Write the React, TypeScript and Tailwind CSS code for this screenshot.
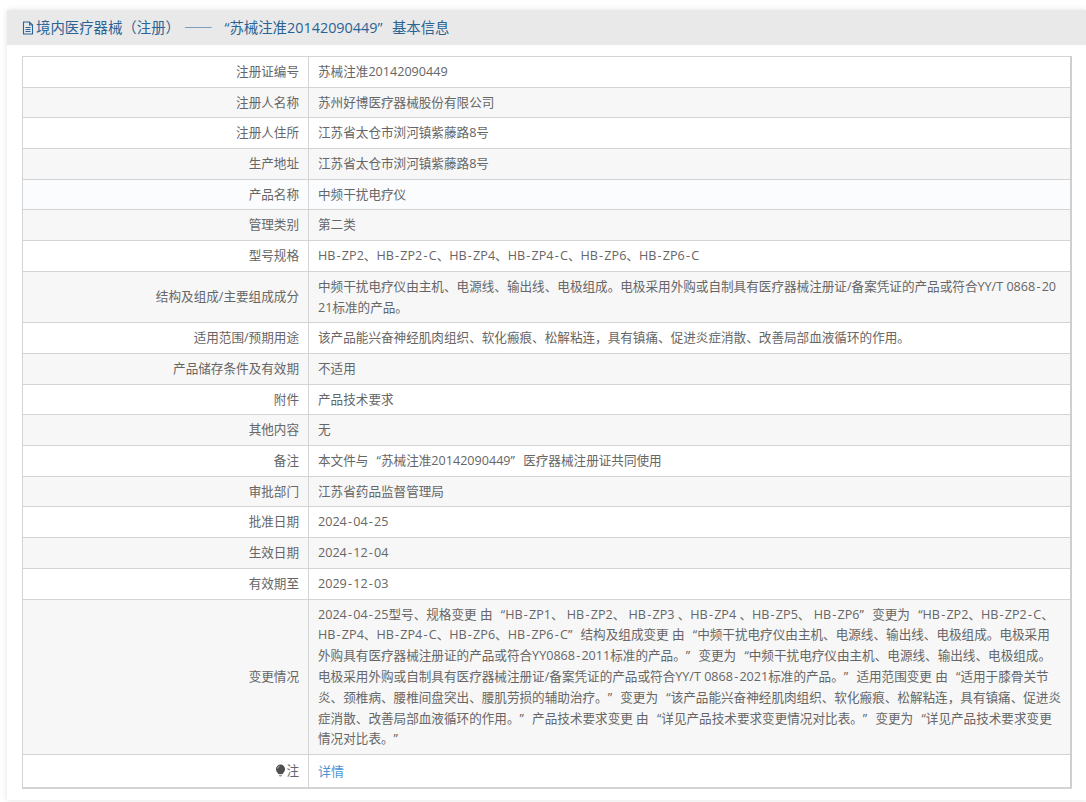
const rows: [string, string[]][] = [
  ["注册证编号", ["苏械注准20142090449"]],
  ["注册人名称", ["苏州好博医疗器械股份有限公司"]],
  ["注册人住所", ["江苏省太仓市浏河镇紫藤路8号"]],
  ["生产地址", ["江苏省太仓市浏河镇紫藤路8号"]],
  ["产品名称", ["中频干扰电疗仪"]],
  ["管理类别", ["第二类"]],
  ["型号规格", ["HB-ZP2、HB-ZP2-C、HB-ZP4、HB-ZP4-C、HB-ZP6、HB-ZP6-C"]],
  ["结构及组成/主要组成成分", ["中频干扰电疗仪由主机、电源线、输出线、电极组成。电极采用外购或自制具有医疗器械注册证/备案凭证的产品或符合YY/T 0868-20", "21标准的产品。"]],
  ["适用范围/预期用途", ["该产品能兴奋神经肌肉组织、软化瘢痕、松解粘连，具有镇痛、促进炎症消散、改善局部血液循环的作用。"]],
  ["产品储存条件及有效期", ["不适用"]],
  ["附件", ["产品技术要求"]],
  ["其他内容", ["无"]],
  ["备注", ["本文件与“苏械注准20142090449”医疗器械注册证共同使用"]],
  ["审批部门", ["江苏省药品监督管理局"]],
  ["批准日期", ["2024-04-25"]],
  ["生效日期", ["2024-12-04"]],
  ["有效期至", ["2029-12-03"]],
  ["变更情况", [
    "2024-04-25型号、规格变更 由“HB-ZP1、 HB-ZP2、 HB-ZP3 、HB-ZP4 、HB-ZP5、 HB-ZP6”变更为“HB-ZP2、HB-ZP2-C、",
    "HB-ZP4、HB-ZP4-C、HB-ZP6、HB-ZP6-C”结构及组成变更 由“中频干扰电疗仪由主机、电源线、输出线、电极组成。电极采用",
    "外购具有医疗器械注册证的产品或符合YY0868-2011标准的产品。”变更为“中频干扰电疗仪由主机、电源线、输出线、电极组成。",
    "电极采用外购或自制具有医疗器械注册证/备案凭证的产品或符合YY/T 0868-2021标准的产品。”适用范围变更 由“适用于膝骨关节",
    "炎、颈椎病、腰椎间盘突出、腰肌劳损的辅助治疗。”变更为“该产品能兴奋神经肌肉组织、软化瘢痕、松解粘连，具有镇痛、促进炎",
    "症消散、改善局部血液循环的作用。”产品技术要求变更 由“详见产品技术要求变更情况对比表。”变更为“详见产品技术要求变更",
    "情况对比表。”",
  ]],
];

// Open Sans has narrow quotes and hyphens, the page's font has wide ones
const Txt = ({ text }: { text: string }) => (
  <>
    {text.split(/([“”]|—+|-)/).map((part, i) => {
      if (part === "-") return <span key={i} className="mx-[1.2px]">-</span>;
      if (part === "“") return <span key={i} className="inline-block w-[1em] text-right">{part}</span>;
      if (part === "”") return <span key={i} className="inline-block w-[1em] text-left">{part}</span>;
      if (part[0] === "—") return <span key={i} className="font-['Noto_Sans_CJK_SC'] tracking-[2.6px]">{part}</span>;
      return part;
    })}
  </>
);

const App = () => {
  return (
    <div lang="zh-CN" className="h-[802px] overflow-hidden bg-white pt-[10px] pl-[7px] font-['Open_Sans','Noto_Sans_CJK_SC',sans-serif]">
      <div className="bg-white shadow-[0_0_6px_rgba(0,0,0,0.12)] pb-[11.5px]">
        <div className="h-[35px] bg-[#e9e9e9] pl-[15px] flex items-center text-[14.4px] text-[#2a6496]">
          <svg viewBox="0 0 12 14" className="w-[12px] h-[14px] mr-[2px]" fill="none" stroke="currentColor" strokeWidth="1.1">
            <path d="M1.5 1h6l3 3v9h-9z" />
            <path d="M7.5 1v3h3M3.5 6.5h5M3.5 8.5h5M3.5 10.5h5" />
          </svg>
          <span><Txt text="境内医疗器械（注册） ——“苏械注准20142090449”基本信息" /></span>
        </div>
        <div className="pl-[15px] pr-[14px] pt-[10.8px]">
          <table className="w-full table-fixed border-collapse border border-r-2 border-[#cfcfcf] text-[12.6px] leading-[20.8px] text-[#666]">
            <colgroup>
              <col className="w-[286px]" />
              <col />
            </colgroup>
            <tbody>
              {rows.map(([label, lines], i) => (
                <tr key={label} className={i === 4 ? "bg-[#fafcfd]" : i % 2 === 1 ? "bg-[#f7f7f7]" : "bg-white"}>
                  <td className="border border-[#d4d4d4] pt-[5px] pb-[3.92px] pr-[9px] text-right">{label}</td>
                  <td className="border border-[#d4d4d4] pt-[5px] pb-[3.92px] pl-[9px] pr-[6px]">
                    {lines.map((line) => (
                      <div key={line} className="whitespace-nowrap"><Txt text={line} /></div>
                    ))}
                  </td>
                </tr>
              ))}
              <tr className="bg-white">
                <td className="border border-[#d4d4d4] border-b-2 py-[5.5px] pr-[9px] text-right">
                  <svg viewBox="0 0 12 14" className="inline-block align-[-2px] w-[11px] h-[13px]">
                    <path d="M6 .5a5 5 0 0 1 5 5c0 2.2-1.6 3.4-2.6 5.2H3.6C2.6 8.9 1 7.7 1 5.5a5 5 0 0 1 5-5z" fill="#4f4f4f" />
                    <path d="M4.2 11.5h3.6v1.2l-1 .8h-1.6l-1-.8z" fill="#9a9a9a" />
                    <path d="M2.6 5a3.4 3.4 0 0 1 2.4-2.8" stroke="#b5b5b5" strokeWidth="1" fill="none" />
                  </svg>
                  注
                </td>
                <td className="border border-[#d4d4d4] border-b-2 py-[5.5px] pl-[9px] text-[13px] text-[#4b95d6]">详情</td>
              </tr>
            </tbody>
          </table>
        </div>
      </div>
    </div>
  );
};

export default App;
